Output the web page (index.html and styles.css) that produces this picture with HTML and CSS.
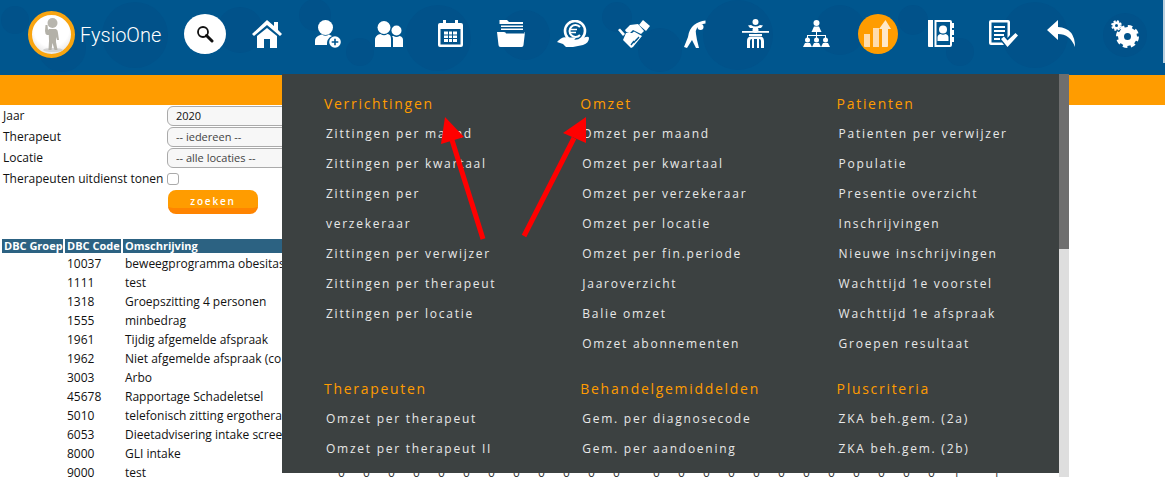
FILE: index.html
```html
<!DOCTYPE html>
<html lang="nl">
<head>
<meta charset="utf-8">
<title>FysioOne</title>
<link rel="stylesheet" href="styles.css">
</head>
<body>
<header class="topbar">
  <svg class="watermark" width="1165" height="75" viewBox="0 0 1165 75">
    <circle cx="15" cy="20" r="14"/><circle cx="62" cy="48" r="24"/><circle cx="135" cy="35" r="33"/><circle cx="240" cy="30" r="23"/><circle cx="315" cy="15" r="16"/><circle cx="360" cy="52" r="14"/><circle cx="438" cy="38" r="33"/><circle cx="525" cy="35" r="25"/><circle cx="617" cy="17" r="15"/><circle cx="660" cy="50" r="22"/><circle cx="738" cy="35" r="35"/><circle cx="840" cy="30" r="25"/><circle cx="913" cy="20" r="15"/><circle cx="960" cy="52" r="14"/><circle cx="1035" cy="35" r="33"/><circle cx="1125" cy="35" r="22"/>
  </svg>
  <a class="brand">
    <span class="avatar">
      <svg width="39" height="39" viewBox="0 0 39 39">
        <ellipse cx="21" cy="35" rx="10" ry="2" fill="#d2d2d2"/>
        <circle cx="20.500" cy="8" r="5" fill="#b8b6ae"/>
        <path d="M13.500 10 L15.500 10 L16 15 L17 14 H24 Q26 15 26 18 L27 25 L25 25 L24 22 L24 27 L25.500 35 L22.500 35 L20.500 28 L19.500 35 L16.500 35 L17 26 L16.800 20 L15 20 Q13 19 13 16 Z" fill="#b3b1a8"/>
      </svg>
    </span>
    <span class="brand-name">FysioOne</span>
  </a>
  <nav class="nav">
    <a class="nav-search">
      <svg width="18" height="18" viewBox="0 0 18 18"><circle cx="7" cy="7" r="5" fill="none" stroke="#111" stroke-width="1.800"/><path d="M10.500 10.500 L16 16" stroke="#111" stroke-width="3" stroke-linecap="round"/></svg>
    </a>
    <a class="nav-item">
      <svg class="ico" width="30" height="28" viewBox="0 0 30 28"><path d="M15 0 L22 6 V2 H26 V10 L30 14 L28 16 L15 5 L2 16 L0 14 Z"/><path d="M5 16 L15 8 L25 16 V28 H18 V19 H12 V28 H5 Z"/></svg>
    </a>
    <a class="nav-item">
      <svg class="ico" width="26" height="28" viewBox="0 0 26 28"><circle cx="10.500" cy="7.500" r="7.500"/><path d="M0 25 V21 C0 17 4 15 7 14.500 Q10.500 17 14 14.500 L17 16 A9 9 0 0 0 12 25 Z"/><circle cx="20" cy="22" r="5.800"/><path d="M20 18.700 V25.300 M16.700 22 H23.300" stroke="#00568e" stroke-width="1.600"/></svg>
    </a>
    <a class="nav-item">
      <svg class="ico" width="28" height="26" viewBox="0 0 28 26"><circle cx="9" cy="6.500" r="6.500"/><circle cx="21.500" cy="9.500" r="5"/><path d="M0 26 V19 C0 15 3 13.500 5.500 13 Q9 15.500 12.500 13 C15 13.500 16 15 16 18 V26 Z"/><path d="M18 26 V18 C18 16.500 17.500 15.500 17 15 Q18 15 18.500 15 Q21.500 17 24.500 15 C27 15.500 28 17 28 19 V26 Z"/></svg>
    </a>
    <a class="nav-item">
      <svg class="ico" width="25" height="27" viewBox="0 0 25 27"><path d="M2 3 H5 V0 H8 V3 H17 V0 H20 V3 H23 Q25 3 25 5 V25 Q25 27 23 27 H2 Q0 27 0 25 V5 Q0 3 2 3 Z M2.500 9 V24.500 H22.500 V9 Z" fill-rule="evenodd"/><path d="M6 11.500 H10 V14.500 H6 Z M11 11.500 H14 V14.500 H11 Z M15 11.500 H19 V14.500 H15 Z M6 15.500 H10 V18 H6 Z M11 15.500 H14 V18 H11 Z M15 15.500 H19 V18 H15 Z M6 19 H10 V22 H6 Z M11 19 H14 V22 H11 Z M15 19 H19 V22 H15 Z"/></svg>
    </a>
    <a class="nav-item">
      <svg class="ico" width="28" height="27" viewBox="0 0 28 27"><path d="M2.500 0 H10 L12 2 H26 V4 H2.500 Z"/><path d="M4 5.500 H26 V7 H4 Z M4 8.500 H26 V10 H4 Z"/><path d="M0 12 H7 Q9 12 9 13.500 H27.500 V12 L28 12 L26.500 25 Q26.500 27 24.500 27 H3.500 Q1.500 27 1.500 25 Z"/></svg>
    </a>
    <a class="nav-item">
      <svg class="ico" width="32" height="27" viewBox="0 0 32 27"><circle cx="18" cy="11" r="10" fill="none" stroke="#fff" stroke-width="2.600"/><path d="M23 7 A6 6 0 1 0 23 15" fill="none" stroke="#fff" stroke-width="2"/><path d="M12 9.500 H20 M12 12.500 H19" stroke="#fff" stroke-width="1.500"/><path d="M0 22 Q5 16 10 17.500 H17 Q20 18 17 20 H13 L20 20.500 L27 17.500 Q32 16 32 18 Q32 23 26 25 L16 27 H9 L6 24 Z"/></svg>
    </a>
    <a class="nav-item">
      <svg class="ico" width="32" height="28" viewBox="0 0 32 28"><path d="M25 0 L32 6 L28 11 L21 5 Z"/><path d="M20 4 L26 11 L23 14 L15 10 L12 13 Q8 13 7 10 L12 5 Z"/><path d="M8 13 L14 13 L16 11.500 L24 16 L15 27 L13 28 L5 20 Z" /><path d="M0 10 L2 8.500 L7 14 L5 16 Z"/><path d="M13 25 L16 21 M15.500 23 L19 19 M18 20.500 L21 17" stroke="#00568e" stroke-width="1.300"/></svg>
    </a>
    <a class="nav-item">
      <svg class="ico" width="22" height="28" viewBox="0 0 22 28"><circle cx="16.500" cy="7" r="3"/><path d="M21.500 .5 V3.500 Q16 4 13 8 Q11 11 12 14 L13 20 L15 28 H12 L8 20 L3 28 L0 27 L4 17 Q5 9 10 5 Q15 1 21.500 .5 Z"/></svg>
    </a>
    <a class="nav-item">
      <svg class="ico" width="27" height="29" viewBox="0 0 27 29"><circle cx="13.500" cy="3" r="3"/><circle cx="13.500" cy="11" r="3"/><path d="M6 6.500 L9 6 Q13.500 9 18 6 L21 6.500 L19 9 H8 Z"/><path d="M0 12 H27 V13.800 H0 Z"/><path d="M7 15 H20 V17 H7 Z"/><path d="M5 29 V22 Q5 17.500 9 17.500 H18 Q22 17.500 22 22 V29 H19 V22 Q19 20 17 20 V29 H15 V20 H12 V29 H10 V20 Q8 20 8 22 V29 Z"/></svg>
    </a>
    <a class="nav-item">
      <svg class="ico" width="27" height="27" viewBox="0 0 27 27"><circle cx="13.500" cy="3" r="3"/><path d="M8.500 12 L11 6.500 H16 L18.500 12 Z"/><path d="M13 12 H14 V15 H23 V18 H22 V16 H14 V18 H13 V16 H5 V18 H4 V15 H13 Z"/><circle cx="4.500" cy="20" r="2.500"/><path d="M0 27 L2 23 H7 L9 27 Z"/><circle cx="13.500" cy="20" r="2.500"/><path d="M9 27 L11 23 H16 L18 27 Z"/><circle cx="22.500" cy="20" r="2.500"/><path d="M18 27 L20 23 H25 L27 27 Z"/></svg>
    </a>
    <a class="nav-chart">
      <svg width="27" height="27" viewBox="0 0 27 27"><path d="M0 14 H6 V27 H1 Q0 27 0 26 Z M9 8 H15 V27 H9 Z" fill="#ffdcae"/><path d="M18 9 H15 L21.500 0 L27 9 H24 V26 Q24 27 23 27 H18 Z" fill="#ffe8c8"/></svg>
    </a>
    <a class="nav-item nav-book">
      <svg class="ico" width="26" height="27" viewBox="0 0 26 27"><path d="M0 0 H5 V27 H1 Q0 27 0 26 Z"/><path fill-rule="evenodd" d="M6.500 0 H22 Q24 0 24 2 V25 Q24 27 22 27 H6.500 Z M8.500 2 V25 H22 V2 Z"/><circle cx="15" cy="9.500" r="4"/><path d="M9.500 21 V17.500 Q9.500 14.500 12.500 14 Q15 15.500 17.500 14 Q20.500 14.500 20.500 17.500 V21 Z"/><path d="M24 3 H26 V8 H24 Z M24 10 H26 V15 H24 Z M24 17 H26 V22 H24 Z"/></svg>
    </a>
    <a class="nav-item">
      <svg class="ico" width="29" height="27" viewBox="0 0 29 27"><path fill-rule="evenodd" d="M2 0 H19 Q21 0 21 2 V15 L18.500 18 V2.500 H2.500 V22.500 H13 L15 25 H2 Q0 25 0 23 V2 Q0 0 2 0 Z"/><path d="M5 6 H16 V8 H5 Z M5 10 H16 V12 H5 Z M5 14 H15 V16 H5 Z M5 18 H11 V20 H5 Z"/><path d="M12 19 L15 16.500 L18.500 20.500 L26.500 13 L29 15.500 L18.500 27 Z"/></svg>
    </a>
    <a class="nav-item nav-reply">
      <svg class="ico" width="28" height="27" viewBox="0 0 28 27"><path d="M11 0 L0 10 L11 20 V14 Q23 14 28 27 Q28 8 11 7 Z"/></svg>
    </a>
    <a class="nav-item nav-gear">
      <svg class="ico" width="28" height="28" viewBox="0 0 28 28"><g fill="none" stroke="#fff"><circle cx="16.500" cy="16.500" r="6.500" stroke-width="6"/><circle cx="16.500" cy="16.500" r="10" stroke-width="3" stroke-dasharray="4.500 3.354"/><circle cx="5.500" cy="5.500" r="2.750" stroke-width="2.500"/><circle cx="5.500" cy="5.500" r="4.400" stroke-width="1.800" stroke-dasharray="2 1.455"/></g></svg>
    </a>
  </nav>
</header>
<div class="orange-bar"></div>
<main class="content">
  <form class="filter">
    <label class="filter-label">Jaar</label>
    <select class="field field-dark"><option>2020</option></select>
    <label class="filter-label">Therapeut</label>
    <select class="field"><option>-- iedereen --</option></select>
    <label class="filter-label">Locatie</label>
    <select class="field"><option>-- alle locaties --</option></select>
    <label class="filter-label">Therapeuten uitdienst tonen</label>
    <input class="check" type="checkbox">
    <span></span>
    <button class="search-btn" type="button">zoeken</button>
  </form>
  <table class="report">
    <colgroup>
      <col class="c-group"><col class="c-code"><col class="c-desc">
      <col span="12" class="c-num"><col class="c-gap">
      <col span="12" class="c-num"><col class="c-num"><col class="c-wide">
    </colgroup>
    <tr><th>DBC Groep</th><th>DBC Code</th><th>Omschrijving</th></tr>
    <tr><td></td><td>10037</td><td>beweegprogramma obesitas</td></tr>
    <tr><td></td><td>1111</td><td>test</td></tr>
    <tr><td></td><td>1318</td><td>Groepszitting 4 personen</td></tr>
    <tr><td></td><td>1555</td><td>minbedrag</td></tr>
    <tr><td></td><td>1961</td><td>Tijdig afgemelde afspraak</td></tr>
    <tr><td></td><td>1962</td><td>Niet afgemelde afspraak (co</td></tr>
    <tr><td></td><td>3003</td><td>Arbo</td></tr>
    <tr><td></td><td>45678</td><td>Rapportage Schadeletsel</td></tr>
    <tr><td></td><td>5010</td><td>telefonisch zitting ergothera</td></tr>
    <tr><td></td><td>6053</td><td>Dieetadvisering intake scree</td></tr>
    <tr><td></td><td>8000</td><td>GLI intake</td></tr>
    <tr class="last">
      <td></td><td>9000</td><td>test</td>
      <td>0</td><td>0</td><td>0</td><td>0</td><td>0</td><td>0</td><td>0</td><td>0</td><td>0</td><td>0</td><td>0</td><td>0</td>
      <td></td>
      <td>0</td><td>0</td><td>0</td><td>0</td><td>0</td><td>0</td><td>0</td><td>0</td><td>0</td><td>0</td><td>0</td><td>0</td>
      <td>1</td><td>1</td>
    </tr>
  </table>
</main>
<div class="mega">
  <div class="mega-panel">
    <section class="mega-col">
      <h3>Verrichtingen</h3>
      <a>Zittingen per maand</a><a>Zittingen per kwartaal</a><a>Zittingen per verzekeraar</a><a>Zittingen per verwijzer</a><a>Zittingen per therapeut</a><a>Zittingen per locatie</a>
    </section>
    <section class="mega-col">
      <h3>Omzet</h3>
      <a>Omzet per maand</a><a>Omzet per kwartaal</a><a>Omzet per verzekeraar</a><a>Omzet per locatie</a><a>Omzet per fin.periode</a><a>Jaaroverzicht</a><a>Balie omzet</a><a>Omzet abonnementen</a>
    </section>
    <section class="mega-col">
      <h3>Patienten</h3>
      <a>Patienten per verwijzer</a><a>Populatie</a><a>Presentie overzicht</a><a>Inschrijvingen</a><a>Nieuwe inschrijvingen</a><a>Wachttijd 1e voorstel</a><a>Wachttijd 1e afspraak</a><a>Groepen resultaat</a>
    </section>
    <section class="mega-col">
      <h3>Therapeuten</h3>
      <a>Omzet per therapeut</a><a>Omzet per therapeut II</a>
    </section>
    <section class="mega-col">
      <h3>Behandelgemiddelden</h3>
      <a>Gem. per diagnosecode</a><a>Gem. per aandoening</a>
    </section>
    <section class="mega-col">
      <h3>Pluscriteria</h3>
      <a>ZKA beh.gem. (2a)</a><a>ZKA beh.gem. (2b)</a>
    </section>
  </div>
  <div class="scrollbar"><div class="scrollbar-thumb"></div></div>
</div>
<svg class="arrows" width="1165" height="477" viewBox="0 0 1165 477">
  <path d="M483 239 L452 140" stroke="#f00" stroke-width="5" fill="none"/>
  <path d="M441 144 L445 117 L464 137 Z" fill="#f00"/>
  <path d="M524 236 L574 138" stroke="#f00" stroke-width="5" fill="none"/>
  <path d="M563 133 L586 117 L586 143 Z" fill="#f00"/>
</svg>
</body>
</html>
```

FILE: styles.css
```css
* { box-sizing: border-box; }
html, body { margin: 0; height: 477px; overflow: hidden; background: #fff; }
body { position: relative; font: 12px/19px "Open Sans", sans-serif; color: #111; }

.topbar { position: relative; height: 75px; background: #00568e; display: flex; align-items: flex-start; overflow: hidden; }
.topbar::after { content: ""; position: absolute; right: 0; top: 0; width: 2px; height: 63px; background: #b9cfde; }
.watermark { position: absolute; left: 0; top: 0; fill: #01528a; }
.brand { position: relative; display: flex; align-items: center; gap: 5px; margin: 11px 0 0 28px; width: 150px; }
.avatar { width: 47px; height: 47px; border: 4px solid #f9a510; border-radius: 50%; background: radial-gradient(circle at 50% 35%, #fff 55%, #d4d4d4 100%); display: block; overflow: hidden; flex: none; }
.avatar svg { display: block; }
.brand-name { font: 300 20px/24px "Roboto", sans-serif; color: #fff; }
.nav { position: relative; display: flex; align-items: center; height: 67px; margin-left: 6px; }
.nav-search { width: 42px; height: 40px; border-radius: 50%; background: #fff; display: flex; align-items: center; justify-content: center; margin-right: 10.500px; }
.nav-item { width: 61.100px; height: 67px; display: flex; align-items: center; justify-content: center; flex: none; }
.nav-chart { width: 40px; height: 40px; margin: 0 10.500px; border-radius: 50%; background: #ff9c00; display: flex; align-items: center; justify-content: center; flex: none; }
.nav-book { width: 65px; }
.nav-reply { width: 53px; }
.nav-gear { width: 75px; }
.ico { fill: #fff; display: block; }

.orange-bar { height: 30px; background: #ff9c00; }

.filter { display: grid; grid-template-columns: 164px 1fr; grid-auto-rows: 21px; align-items: center; padding-left: 3px; width: 500px; }
.filter-label { white-space: nowrap; }
.field { appearance: none; width: 200px; height: 20px; padding: 0 8px; border: 1px solid #aaa; border-radius: 6px; background: #f7f7f7; font: 11px "Open Sans", sans-serif; color: #444; }
.field-dark { color: #111; }
.check { appearance: none; width: 12px; height: 12px; margin: 0; border: 1px solid #aaa; border-radius: 3px; background: #fff; }
.search-btn { align-self: start; width: 90px; height: 24px; margin: 1px 0 0 1px; padding: 5px 0 0; border: 0; border-bottom: 6px solid #ff8400; border-radius: 8px; background: #ff9c00; color: #fff; font: 600 10px/13px "Open Sans", sans-serif; letter-spacing: 1.800px; }

.report { position: absolute; left: 0; top: 237px; table-layout: fixed; width: 1025px; border-collapse: separate; border-spacing: 2px; }
.c-group { width: 61px; } .c-code { width: 56px; } .c-desc { width: 205px; } .c-num { width: 23px; } .c-gap { width: 13px; } .c-wide { width: 53px; }
.report th { height: 14px; padding: 0 2px; background: #2c6282; color: #fff; font: 700 11px/14px "Open Sans", sans-serif; text-align: left; white-space: nowrap; overflow: hidden; }
.report td { height: 17px; padding: 0 2px; line-height: 17px; white-space: nowrap; overflow: hidden; }
.last td:nth-child(n+4) { padding: 0; text-align: center; color: #333; }

.mega { position: absolute; left: 282px; top: 74px; width: 787px; height: 403px; display: flex; align-items: flex-start; }
.mega-panel { width: 777px; height: 399px; background: #3c4141; overflow: hidden; display: grid; grid-template-columns: repeat(3, 256.300px); grid-template-rows: 285px 1fr; padding: 15px 0 0 42px; }
.mega-col h3 { margin: 0; font: 400 14px/30px "Open Sans", sans-serif; letter-spacing: 1.700px; color: #ff9c00; }
.mega-col a { display: block; width: 178px; padding-left: 2px; font-size: 12px; line-height: 30px; letter-spacing: 1.740px; color: #e8e8e8; }
.scrollbar { width: 10px; height: 403px; background: #dedede; }
.scrollbar-thumb { height: 175px; background: #6e6e6e; }

.arrows { position: absolute; left: 0; top: 0; pointer-events: none; }
```
